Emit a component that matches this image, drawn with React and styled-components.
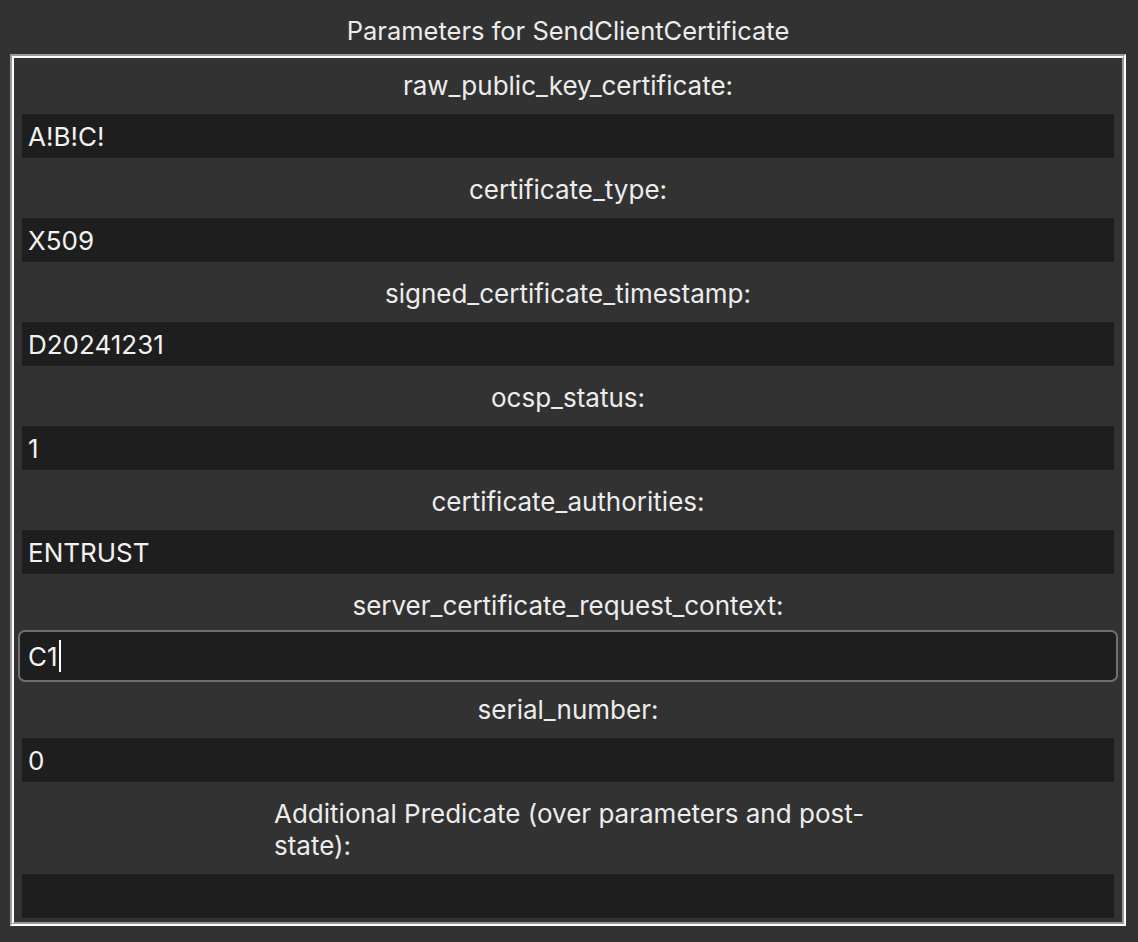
import React from "react";
import styled, { createGlobalStyle } from "styled-components";

const GlobalStyle = createGlobalStyle`
  html, body {
    margin: 0;
    padding: 0;
    background: #323232;
  }
  body {
    font-family: Inter, "Noto Sans", "Liberation Sans", sans-serif;
    color: #ececec;
  }
`;

const Page = styled.div`
  width: 1138px;
  height: 942px;
  background: #323232;
  padding: 0 12px 12px 10px;
  box-sizing: border-box;
  display: flex;
  flex-direction: column;
`;

const Title = styled.div`
  height: 54px;
  display: flex;
  align-items: center;
  justify-content: center;
  font-size: 25.5px;
  padding-top: 6px;
  box-sizing: border-box;
`;

/* groove frame, Tk style: outer dark/light, inner light/dark */
const OuterFrame = styled.div`
  border-style: solid;
  border-width: 2px;
  border-color: #9a9a9a #ffffff #ffffff #9a9a9a;
  width: 1116px;
  box-sizing: border-box;
`;

const InnerFrame = styled.div`
  border-style: solid;
  border-width: 2px;
  border-color: #ffffff #9a9a9a #9a9a9a #ffffff;
  padding: 0 8px 4px 8px;
  display: flex;
  flex-direction: column;
  gap: 4px;
`;

const Field = styled.div`
  display: flex;
  flex-direction: column;
`;

const Label = styled.div`
  height: ${(p) => (p.$tall ? 88 : 56)}px;
  display: flex;
  align-items: center;
  justify-content: center;
  font-size: 26px;
  line-height: 32px;
`;

const Wrapped = styled.div`
  width: 592px;
  margin-left: 4px;
  text-align: left;
`;

const Input = styled.div`
  height: 44px;
  background: #1e1e1e;
  display: flex;
  align-items: center;
  padding-left: 6px;
  font-size: 26px;
  color: #f2f2f2;
  border-radius: 1px;
  ${(p) =>
    p.$focused &&
    `
    box-shadow: 0 0 0 2px #1e1e1e, 0 0 0 4px #707070;
    border-radius: 3px;
  `}
`;

const Caret = styled.span`
  display: inline-block;
  width: 2px;
  height: 32px;
  background: #ffffff;
  margin-left: 1px;
`;

const fields = [
  { label: "raw_public_key_certificate:", value: "A!B!C!" },
  { label: "certificate_type:", value: "X509" },
  { label: "signed_certificate_timestamp:", value: "D20241231" },
  { label: "ocsp_status:", value: "1" },
  { label: "certificate_authorities:", value: "ENTRUST" },
  { label: "server_certificate_request_context:", value: "C1", focused: true },
  { label: "serial_number:", value: "0" },
];

export default function App() {
  return (
    <>
      <GlobalStyle />
      <Page>
        <Title>Parameters for SendClientCertificate</Title>
        <OuterFrame>
          <InnerFrame>
            {fields.map((f) => (
              <Field key={f.label}>
                <Label>{f.label}</Label>
                <Input $focused={f.focused}>
                  {f.value}
                  {f.focused && <Caret />}
                </Input>
              </Field>
            ))}
            <Field>
              <Label $tall>
                <Wrapped>
                  Additional Predicate (over parameters and post-state):
                </Wrapped>
              </Label>
              <Input />
            </Field>
          </InnerFrame>
        </OuterFrame>
      </Page>
    </>
  );
}
